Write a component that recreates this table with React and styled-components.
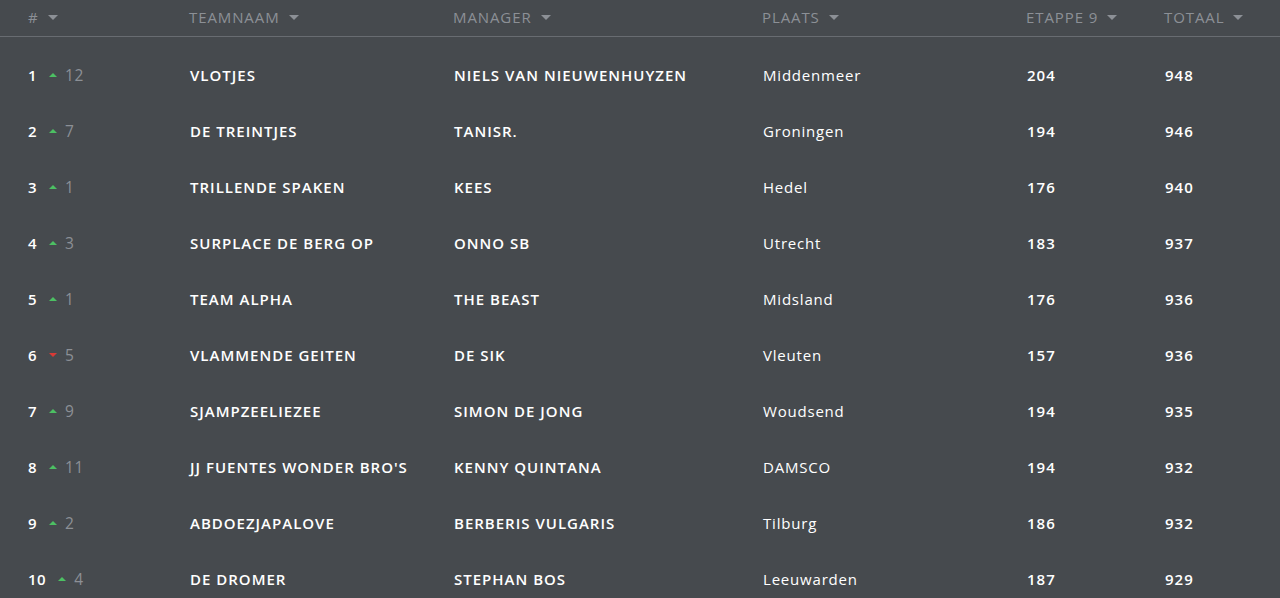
import React from 'react';
import styled, { createGlobalStyle } from 'styled-components';

const rows = [
  { rank: 1, dir: 'up', change: 12, team: 'VLOTJES', manager: 'NIELS VAN NIEUWENHUYZEN', place: 'Middenmeer', stage: 204, total: 948 },
  { rank: 2, dir: 'up', change: 7, team: 'DE TREINTJES', manager: 'TANISR.', place: 'Groningen', stage: 194, total: 946 },
  { rank: 3, dir: 'up', change: 1, team: 'TRILLENDE SPAKEN', manager: 'KEES', place: 'Hedel', stage: 176, total: 940 },
  { rank: 4, dir: 'up', change: 3, team: 'SURPLACE DE BERG OP', manager: 'ONNO SB', place: 'Utrecht', stage: 183, total: 937 },
  { rank: 5, dir: 'up', change: 1, team: 'TEAM ALPHA', manager: 'THE BEAST', place: 'Midsland', stage: 176, total: 936 },
  { rank: 6, dir: 'down', change: 5, team: 'VLAMMENDE GEITEN', manager: 'DE SIK', place: 'Vleuten', stage: 157, total: 936 },
  { rank: 7, dir: 'up', change: 9, team: 'SJAMPZEELIEZEE', manager: 'SIMON DE JONG', place: 'Woudsend', stage: 194, total: 935 },
  { rank: 8, dir: 'up', change: 11, team: "JJ FUENTES WONDER BRO'S", manager: 'KENNY QUINTANA', place: 'DAMSCO', stage: 194, total: 932 },
  { rank: 9, dir: 'up', change: 2, team: 'ABDOEZJAPALOVE', manager: 'BERBERIS VULGARIS', place: 'Tilburg', stage: 186, total: 932 },
  { rank: 10, dir: 'up', change: 4, team: 'DE DROMER', manager: 'STEPHAN BOS', place: 'Leeuwarden', stage: 187, total: 929 },
];

const columns = ['#', 'TEAMNAAM', 'MANAGER', 'PLAATS', 'ETAPPE 9', 'TOTAAL'];

const GlobalStyle = createGlobalStyle`
  body {
    margin: 0;
    background: #464a4e;
    font-family: "Open Sans", "Liberation Sans", Arial, sans-serif;
    overflow: hidden;
  }
`;

const Table = styled.div`
  width: 1280px;
  height: 598px;
  background: #464a4e;
`;

const Grid = styled.div`
  display: grid;
  grid-template-columns: 161px 264px 309px 264px 138px 1fr;
  padding-left: 28px;
  align-items: center;
`;

const HeaderRow = styled(Grid)`
  height: 36px;
  border-bottom: 1px solid #686c71;
  margin-bottom: 10px;
`;

const HeadCell = styled.div`
  display: flex;
  align-items: center;
  gap: 9px;
  color: #8c9096;
  font-size: 15px;
  letter-spacing: 0.9px;
  margin-top: -2px;
`;

const Caret = styled.span`
  width: 0;
  height: 0;
  border-left: 5.5px solid transparent;
  border-right: 5.5px solid transparent;
  border-top: 5.5px solid #8c9096;
`;

const BodyRow = styled(Grid)`
  height: 56px;
`;

const Cell = styled.div`
  color: #ffffff;
  font-size: 15px;
  font-weight: ${p => (p.light ? 400 : 600)};
  letter-spacing: ${p => (p.light ? '0.8px' : '1px')};
  padding-left: ${p => (p.shift ? '1px' : '0')};
  white-space: nowrap;
`;

const RankCell = styled(Cell)`
  display: flex;
  align-items: center;
  letter-spacing: 0.5px;
`;

const RankNum = styled.span`
  margin-right: 12px;
`;

const Arrow = styled.span`
  width: 0;
  height: 0;
  border-left: 4px solid transparent;
  border-right: 4px solid transparent;
  ${p => (p.dir === 'up'
    ? 'border-bottom: 4px solid #4cc063;'
    : 'border-top: 4px solid #d93a36;')}
  margin-right: 8px;
`;

const Change = styled.span`
  color: #8c9096;
  font-weight: 400;
  font-size: 15.5px;
`;

export default function App() {
  return (
    <Table>
      <GlobalStyle />
      <HeaderRow>
        {columns.map(c => (
          <HeadCell key={c}>
            {c}
            <Caret />
          </HeadCell>
        ))}
      </HeaderRow>
      {rows.map(r => (
        <BodyRow key={r.rank}>
          <RankCell>
            <RankNum>{r.rank}</RankNum>
            <Arrow dir={r.dir} />
            <Change>{r.change}</Change>
          </RankCell>
          <Cell shift>{r.team}</Cell>
          <Cell shift>{r.manager}</Cell>
          <Cell light shift>{r.place}</Cell>
          <Cell shift>{r.stage}</Cell>
          <Cell shift>{r.total}</Cell>
        </BodyRow>
      ))}
    </Table>
  );
}
